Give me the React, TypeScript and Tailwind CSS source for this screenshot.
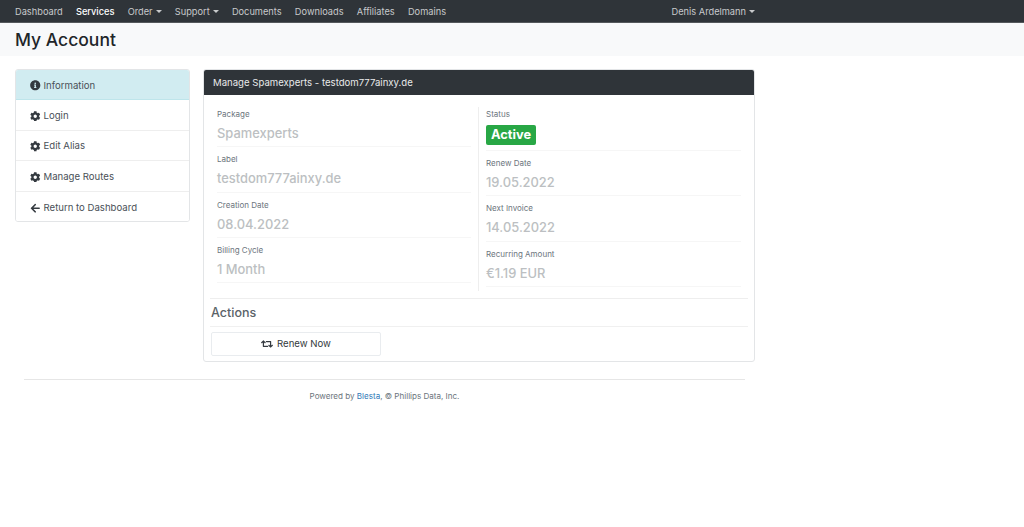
import { FaArrowLeft, FaCog, FaInfoCircle, FaRetweet } from "react-icons/fa";

const navLinks = [
  { label: "Dashboard" },
  { label: "Services", active: true },
  { label: "Order", caret: true },
  { label: "Support", caret: true },
  { label: "Documents" },
  { label: "Downloads" },
  { label: "Affiliates" },
  { label: "Domains" },
];

const sideLinks = [
  { label: "Information", icon: <FaInfoCircle />, active: true },
  { label: "Login", icon: <FaCog /> },
  { label: "Edit Alias", icon: <FaCog /> },
  { label: "Manage Routes", icon: <FaCog /> },
  { label: "Return to Dashboard", icon: <FaArrowLeft /> },
];

function Caret() {
  return <span className="ml-[3px] inline-block border-x-[3px] border-t-[3px] border-x-transparent border-t-current align-[2px]" />;
}

function Field({ label, value }: { label: string; value: string }) {
  return (
    <div className="h-[45.33px] border-b border-[#f6f6f6] pt-[5px] first:h-[40.33px] first:pt-0">
      <div className="text-[8px] leading-[14px] text-[#6c757d]">{label}</div>
      <div className="mt-[4px] text-[12.9px] leading-[18px] font-medium text-[#bcbfc2]">{value}</div>
    </div>
  );
}

export default function App() {
  return (
    <div className="min-h-[527px] bg-white font-['Inter',sans-serif] text-[#495057]">
      <nav className="flex h-[23px] items-center border-b border-[#55595c] bg-[#2f3439] pt-[1px] pr-[269px] pl-[15px] text-[9.25px] text-[#c8cacc]">
        <div className="flex gap-[13.2px]">
          {navLinks.map((link) => (
            <span key={link.label} className={link.active ? "font-medium text-white" : ""}>
              {link.label}
              {link.caret && <Caret />}
            </span>
          ))}
        </div>
        <span className="ml-auto">
          Denis Ardelmann
          <Caret />
        </span>
      </nav>

      <header className="flex h-[33px] items-center bg-[#f8f9fa] pl-[15px]">
        <h1 className="text-[17.5px] leading-[22px] font-medium text-[#212529]">My Account</h1>
      </header>

      <main className="flex w-[755px] gap-[13px] pt-[13px] pl-[15px]">
        <aside className="h-[153px] w-[175px] shrink-0 overflow-hidden rounded-[3px] border border-[#e3e5e7]">
          {sideLinks.map((link) => (
            <div
              key={link.label}
              className={`flex h-[30.4px] items-center gap-[3px] border-b pt-[2px] pl-[14px] text-[9.6px] last:border-b-0 ${
                link.active ? "border-[#bee5eb] bg-[#d1ecf1]" : "border-[#eeeeee] bg-white"
              }`}
            >
              <span className="text-[10.5px] text-[#343a40]">{link.icon}</span>
              {link.label}
            </div>
          ))}
        </aside>

        <section className="h-[293px] w-[552px] shrink-0 overflow-hidden rounded-[3px] border border-[#e3e5e7]">
          <div className="flex h-[25px] items-center bg-[#2f3439] pt-[1px] pl-[9px] text-[9.6px] text-[#e9eaeb]">
            Manage Spamexperts - testdom777ainxy.de
          </div>

          <div className="px-[6px]">
            <div className="flex h-[204px] border-b border-[#eeeeee] pt-[12px]">
              <div className="w-[268px] pr-[7px] pl-[7px]">
                <Field label="Package" value="Spamexperts" />
                <Field label="Label" value="testdom777ainxy.de" />
                <Field label="Creation Date" value="08.04.2022" />
                <Field label="Billing Cycle" value="1 Month" />
              </div>
              <div className="h-[184px] flex-1 border-l border-[#eeeeee] pr-[7px] pl-[7px]">
                <div className="h-[44px] border-b border-[#f6f6f6]">
                  <div className="text-[8px] leading-[14px] text-[#6c757d]">Status</div>
                  <span className="mt-[2px] inline-block rounded-[2px] bg-[#28a745] px-[5px] text-[12.8px] leading-[20px] font-bold text-white">
                    Active
                  </span>
                </div>
                <Field label="Renew Date" value="19.05.2022" />
                <Field label="Next Invoice" value="14.05.2022" />
                <Field label="Recurring Amount" value="€1.19 EUR" />
              </div>
            </div>

            <h2 className="flex h-[28px] items-center border-b border-[#f0f0f0] pt-[2px] pl-[1px] text-[12.5px] font-medium text-[#5a6268]">
              Actions
            </h2>
            <button
              type="button"
              className="mt-[5px] ml-[1px] flex h-[24px] w-[170px] items-center justify-center gap-[4px] rounded-[2px] border border-[#e9ecef] bg-white text-[9.6px] text-[#343a40]"
            >
              <FaRetweet className="text-[12px]" />
              Renew Now
            </button>
          </div>
        </section>
      </main>

      <footer className="mt-[17px] ml-[24px] w-[721px] border-t border-[#e6e6e6] pt-[10px] text-center text-[8.06px] leading-[12px] text-[#6c757d]">
        Powered by <span className="text-[#337ab7]">Blesta</span>, © Phillips Data, Inc.
      </footer>
    </div>
  );
}
